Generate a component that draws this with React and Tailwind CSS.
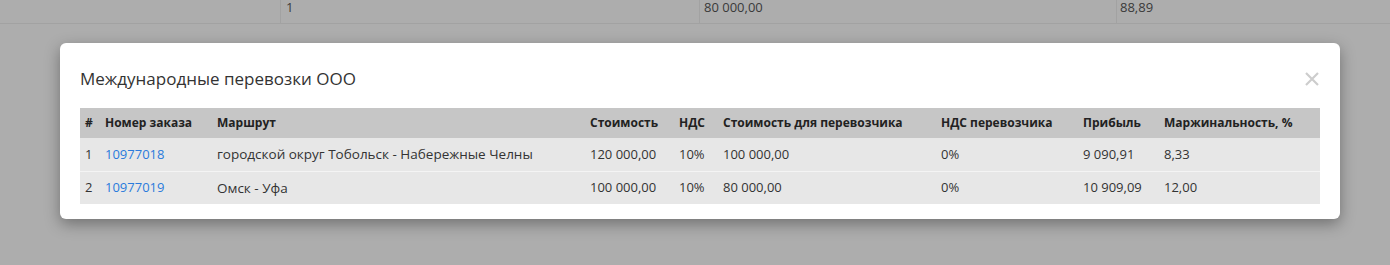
export default function App() {
  const rows = [
    { n: 1, id: '10977018', route: 'городской округ Тобольск - Набережные Челны', cost: '120 000,00', vat: '10%', carrier: '100 000,00', carrierVat: '0%', profit: '9 090,91', margin: '8,33' },
    { n: 2, id: '10977019', route: 'Омск - Уфа', cost: '100 000,00', vat: '10%', carrier: '80 000,00', carrierVat: '0%', profit: '10 909,09', margin: '12,00' },
  ];

  return (
    <div className="min-h-[265px] w-[1390px] bg-[#adadad] font-['Open_Sans',sans-serif] text-[13px]">
      {/* строка таблицы под подложкой */}
      <div className="flex h-[24px] border-b border-[#a2a2a2] text-[#3a3a3a]">
        <div className="w-[281px] border-r border-[#a2a2a2]" />
        <div className="w-[419px] border-r border-[#a2a2a2] pl-[5px] leading-[14px]">1</div>
        <div className="w-[417px] border-r border-[#a2a2a2] pl-[4px] leading-[14px]">80 000,00</div>
        <div className="flex-1 pl-[3px] leading-[14px]">88,89</div>
      </div>

      <div className="pl-[60px] pt-[19px]">
        <div className="w-[1280px] rounded-[6px] bg-white px-[20px] pt-[23px] pb-[15px] shadow-[0_5px_15px_rgba(0,0,0,0.35)]">
          <div className="flex items-center justify-between">
            <h4 className="text-[17px] leading-[26px] text-[#333]">Международные перевозки ООО</h4>
            <svg width="14" height="14" viewBox="0 0 14 14" className="mr-[1px] text-[#cdcdcd]">
              <path d="M1 1L13 13M13 1L1 13" stroke="currentColor" strokeWidth="2.2" />
            </svg>
          </div>

          <table className="mt-[16px] w-full table-fixed border-collapse text-[#333]">
            <colgroup>
              <col className="w-[20px]" />
              <col className="w-[112px]" />
              <col className="w-[373px]" />
              <col className="w-[89px]" />
              <col className="w-[44px]" />
              <col className="w-[218px]" />
              <col className="w-[142px]" />
              <col className="w-[81px]" />
              <col className="w-[161px]" />
            </colgroup>
            <thead>
              <tr className="h-[30px] bg-[#c6c6c6] text-left text-[12px] font-bold text-[#222]">
                <th className="px-[5px]">#</th>
                <th className="px-[5px]">Номер заказа</th>
                <th className="px-[5px]">Маршрут</th>
                <th className="px-[5px]">Стоимость</th>
                <th className="px-[5px]">НДС</th>
                <th className="px-[5px]">Стоимость для перевозчика</th>
                <th className="px-[5px]">НДС перевозчика</th>
                <th className="px-[5px]">Прибыль</th>
                <th className="px-[5px]">Маржинальность, %</th>
              </tr>
            </thead>
            <tbody>
              {rows.map((r) => (
                <tr key={r.n} className="h-[33px] border-t border-[#f4f4f4] bg-[#e7e7e7] first:border-t-0">
                  <td className="px-[5px]">{r.n}</td>
                  <td className="px-[5px]"><a className="text-[#2a7bdc]">{r.id}</a></td>
                  <td className="px-[5px] text-[13.5px]">{r.route}</td>
                  <td className="px-[5px]">{r.cost}</td>
                  <td className="px-[5px]">{r.vat}</td>
                  <td className="px-[5px]">{r.carrier}</td>
                  <td className="px-[5px]">{r.carrierVat}</td>
                  <td className="px-[5px]">{r.profit}</td>
                  <td className="px-[5px]">{r.margin}</td>
                </tr>
              ))}
            </tbody>
          </table>
        </div>
      </div>
    </div>
  );
}
